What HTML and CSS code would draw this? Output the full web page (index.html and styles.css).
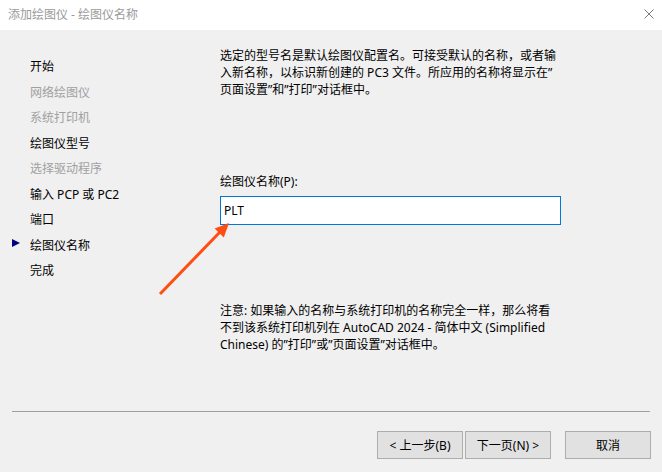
FILE: index.html
```html
<!DOCTYPE html>
<html lang="zh-CN">
<head>
<meta charset="utf-8">
<title>添加绘图仪 - 绘图仪名称</title>
<link rel="stylesheet" href="styles.css">
</head>
<body>
<div class="window">
  <header class="titlebar">
    <span class="title">添加绘图仪 - 绘图仪名称</span>
    <svg class="close" width="10" height="10" viewBox="0 0 10 10"><path d="M0.5 0.5 L9.5 9.5 M9.5 0.5 L0.5 9.5" stroke="#7a7a7a" stroke-width="1" fill="none"/></svg>
  </header>
  <main class="body">
    <div class="wizard">
      <nav class="steps">
        <ul>
          <li>开始</li>
          <li class="disabled">网络绘图仪</li>
          <li class="disabled">系统打印机</li>
          <li>绘图仪型号</li>
          <li class="disabled">选择驱动程序</li>
          <li>输入 PCP 或 PC2</li>
          <li>端口</li>
          <li class="current">绘图仪名称</li>
          <li>完成</li>
        </ul>
      </nav>
      <section class="content">
        <p class="intro">选定的型号名是默认绘图仪配置名。可接受默认的名称，或者输<br>入新名称，以标识新创建的 PC3 文件。所应用的名称将显示在”<br>页面设置”和”打印”对话框中。</p>
        <label class="field-label" for="plotter-name">绘图仪名称(P):</label>
        <input class="field" id="plotter-name" type="text" value="PLT">
        <p class="note">注意: 如果输入的名称与系统打印机的名称完全一样，那么将看<br>不到该系统打印机列在 AutoCAD 2024 - 简体中文 (Simplified<br>Chinese) 的”打印”或”页面设置”对话框中。</p>
      </section>
    </div>
    <hr class="sep">
    <footer class="buttons">
      <button class="btn">&lt; 上一步(B)</button>
      <button class="btn">下一页(N) &gt;</button>
      <button class="btn cancel">取消</button>
    </footer>
  </main>
  <svg class="callout" width="662" height="472" viewBox="0 0 662 472">
    <line x1="160" y1="294" x2="220" y2="232" stroke="#ff4e12" stroke-width="3"/>
    <polygon points="229,223 223.8,237.5 214.6,228.6" fill="#ff4e12"/>
  </svg>
</div>
</body>
</html>
```
FILE: styles.css
```css
* { box-sizing: border-box; }
html, body { margin: 0; padding: 0; }
body {
  width: 662px;
  height: 472px;
  overflow: hidden;
  font-family: "Noto Sans", "Noto Sans CJK SC", sans-serif;
  font-size: 12px;
  color: #000;
  background: #f0f0f0;
}
.window {
  position: relative;
  width: 662px;
  height: 472px;
  display: flex;
  flex-direction: column;
}
.titlebar {
  height: 30px;
  flex: none;
  background: #fff;
  display: flex;
  align-items: center;
  justify-content: space-between;
  padding: 0 8px 0 8px;
}
.title {
  color: #9a9a9a;
  font-size: 12px;
  line-height: 17px;
  margin-top: -1px;
}
.close { margin-right: 0; margin-top: -2px; }
.body {
  flex: 1;
  display: flex;
  flex-direction: column;
  background: #f0f0f0;
}
.wizard {
  height: 381px;
  display: flex;
}
.steps {
  width: 220px;
  flex: none;
  padding-top: 24px;
}
.steps ul {
  list-style: none;
  margin: 0;
  padding: 0;
}
.steps li {
  position: relative;
  padding-left: 30px;
  line-height: 25.5px;
  height: 25.5px;
  white-space: nowrap;
}
.steps li.disabled { color: #a0a0a0; }
.steps li.current::before {
  content: "";
  position: absolute;
  left: 12px;
  top: 6.5px;
  width: 0;
  height: 0;
  border-top: 4.5px solid transparent;
  border-bottom: 4.5px solid transparent;
  border-left: 8px solid #000080;
}
.content {
  flex: 1;
  padding-top: 17px;
  display: flex;
  flex-direction: column;
  align-items: flex-start;
}
.intro, .note {
  margin: 0;
  line-height: 17px;
  white-space: nowrap;
}
.field-label {
  margin-top: 75px;
  line-height: 17px;
}
.field {
  margin-top: 6px;
  width: 341px;
  height: 29px;
  border: 1px solid #0078d7;
  background: #fff;
  font-family: inherit;
  font-size: 12px;
  color: #000;
  padding: 0 3px;
  outline: none;
}
.note { margin-top: 77px; }
.sep {
  margin: 0 12px 0 12px;
  border: 0;
  height: 1px;
  background: #a0a0a0;
  flex: none;
}
.buttons {
  display: flex;
  justify-content: flex-end;
  padding: 19px 11px 0 0;
}
.btn {
  width: 86px;
  height: 28px;
  background: #e1e1e1;
  border: 1px solid #adadad;
  font-family: inherit;
  font-size: 12px;
  color: #000;
  padding: 0;
  margin-left: 2px;
}
.btn.cancel { margin-left: 14px; }
.callout {
  position: absolute;
  left: 0;
  top: 0;
  pointer-events: none;
}
```
